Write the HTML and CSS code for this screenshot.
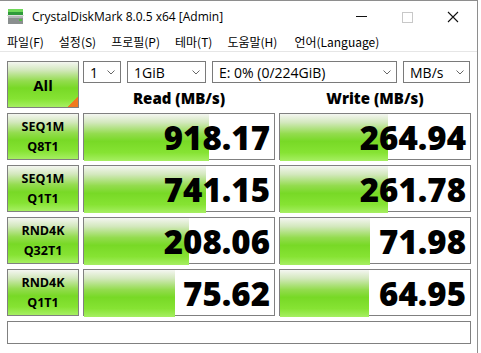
FILE: index.html
```html
<!DOCTYPE html>
<html>
  <head>
    <title>CrystalDiskMark 8.0.5 x64 [Admin]</title>
    <meta charset="utf-8" />
    <link rel="stylesheet" href="styles.css">
  </head>
  <body>
    <div class="window">
      <div class="titlebar">
        <svg class="appicon" width="17" height="17" viewBox="0 0 17 17">
          <rect x="1" y="1" width="15" height="3" fill="#6fd85a"/>
          <rect x="1" y="4" width="15" height="3" fill="#2f9a3a"/>
          <rect x="0" y="7" width="17" height="1" fill="#dcdcdc"/>
          <rect x="1" y="8" width="15" height="8" fill="#8a8f8f"/>
          <rect x="1" y="8" width="15" height="2" fill="#b4b8b8"/>
          <rect x="12" y="11" width="3" height="2" fill="#4ec040"/>
        </svg>
        <span class="title">CrystalDiskMark 8.0.5 x64 [Admin]</span>
        <div class="controls">
          <svg width="46" height="31" viewBox="0 0 46 31"><rect x="18" y="15" width="11" height="1" fill="#111"/></svg>
          <svg width="46" height="31" viewBox="0 0 46 31"><rect x="18.5" y="11.5" width="10" height="10" fill="none" stroke="#c8c8c8"/></svg>
          <svg width="46" height="31" viewBox="0 0 46 31"><path d="M18 11 L28 21 M28 11 L18 21" stroke="#111" stroke-width="1.1"/></svg>
        </div>
      </div>
      <div class="menubar">
        <span>파일(F)</span>
        <span>설정(S)</span>
        <span>프로필(P)</span>
        <span>테마(T)</span>
        <span>도움말(H)</span>
        <span>언어(Language)</span>
      </div>
      <div class="main">
        <div class="all"><span>All</span></div>
        <div class="top">
          <div class="selects">
            <div class="select s1"><span>1</span><svg width="8" height="5" viewBox="0 0 8 5"><path d="M0.5 0.5 L4 4 L7.5 0.5" fill="none" stroke="#666"/></svg></div>
            <div class="select s2"><span>1GiB</span><svg width="8" height="5" viewBox="0 0 8 5"><path d="M0.5 0.5 L4 4 L7.5 0.5" fill="none" stroke="#666"/></svg></div>
            <div class="select s3"><span>E: 0% (0/224GiB)</span><svg width="8" height="5" viewBox="0 0 8 5"><path d="M0.5 0.5 L4 4 L7.5 0.5" fill="none" stroke="#666"/></svg></div>
            <div class="select s4"><span>MB/s</span><svg width="8" height="5" viewBox="0 0 8 5"><path d="M0.5 0.5 L4 4 L7.5 0.5" fill="none" stroke="#666"/></svg></div>
          </div>
          <div class="heads">
            <div class="head">Read (MB/s)</div>
            <div class="head">Write (MB/s)</div>
          </div>
        </div>

        <div class="label">SEQ1M<br>Q8T1</div>
        <div class="value"><div class="bar" style="width:125px"></div><span>918.17</span></div>
        <div class="value"><div class="bar" style="width:108px"></div><span>264.94</span></div>

        <div class="label">SEQ1M<br>Q1T1</div>
        <div class="value"><div class="bar" style="width:122px"></div><span>741.15</span></div>
        <div class="value"><div class="bar" style="width:108px"></div><span>261.78</span></div>

        <div class="label">RND4K<br>Q32T1</div>
        <div class="value"><div class="bar" style="width:105px"></div><span>208.06</span></div>
        <div class="value"><div class="bar" style="width:90px"></div><span>71.98</span></div>

        <div class="label">RND4K<br>Q1T1</div>
        <div class="value"><div class="bar" style="width:91px"></div><span>75.62</span></div>
        <div class="value"><div class="bar" style="width:89px"></div><span>64.95</span></div>

        <div class="comment"></div>
      </div>
    </div>
  </body>
</html>
```

FILE: styles.css
```css
body {
  margin: 0;
  background: #fff;
  font-family: "Open Sans", "Noto Sans CJK KR", sans-serif;
  color: #000;
}
.window {
  width: 477px;
  height: 352px;
  border: 1px solid #8e8e8e;
  border-left: none;
  background: #fff;
}
.titlebar {
  height: 31px;
  display: flex;
  align-items: center;
}
.appicon {
  margin-left: 7px;
}
.title {
  margin-left: 8px;
  font-size: 12px;
  flex: 1;
}
.controls {
  display: flex;
  margin-right: 1px;
}
.controls svg {
  display: block;
}
.menubar {
  height: 19px;
  display: flex;
  align-items: center;
  padding-left: 7px;
  gap: 15px;
  font-family: "Noto Sans CJK KR", sans-serif;
  font-size: 12px;
  border-bottom: 1px solid #e6e6e6;
}
.menubar span:last-child {
  margin-left: 2px;
}
.main {
  display: grid;
  grid-template-columns: 72px 192px 192px;
  grid-template-rows: 47px repeat(4, 47px) 23px;
  column-gap: 4px;
  row-gap: 5px;
  padding: 9px 0 0 7px;
}
.all, .label, .bar {
  background: linear-gradient(#f4f6f1 0%, #d3e8bd 18%, #93dc4e 42%, #78d926 58%, #86e333 82%, #a6ef62 100%);
}
.all, .label {
  border: 1px solid #808080;
  box-sizing: border-box;
  display: flex;
  align-items: center;
  justify-content: center;
  font-weight: bold;
  text-align: center;
}
.all {
  font-size: 15px;
  background-image: linear-gradient(135deg, transparent 91%, #f07a1e 91%), linear-gradient(#f4f6f1 0%, #d3e8bd 18%, #93dc4e 42%, #78d926 58%, #86e333 82%, #a6ef62 100%);
}
.label {
  font-size: 12.5px;
  line-height: 20px;
}
.top {
  grid-column: 2 / 4;
  display: flex;
  flex-direction: column;
}
.selects {
  display: flex;
  gap: 6px;
  height: 22px;
}
.select {
  border: 1px solid #7a7a7a;
  box-sizing: border-box;
  display: flex;
  align-items: center;
  justify-content: space-between;
  padding: 0 5px 0 6px;
  font-size: 14px;
}
.s1 { width: 38px; }
.s2 { width: 79px; }
.s3 { width: 185px; }
.s4 { width: 67px; }
.heads {
  flex: 1;
  display: grid;
  grid-template-columns: 192px 192px;
  column-gap: 4px;
  align-items: end;
}
.head {
  text-align: center;
  font-weight: 800;
  font-size: 15px;
  line-height: 20px;
}
.value {
  border: 1px solid #808080;
  display: grid;
  align-items: center;
}
.value .bar, .value span {
  grid-area: 1 / 1;
}
.bar {
  height: 100%;
}
.value span {
  justify-self: end;
  padding-right: 4px;
  font-size: 33px;
  font-weight: 800;
  line-height: 47px;
}
.comment {
  grid-column: 1 / 4;
  border: 1px solid #808080;
}
```
